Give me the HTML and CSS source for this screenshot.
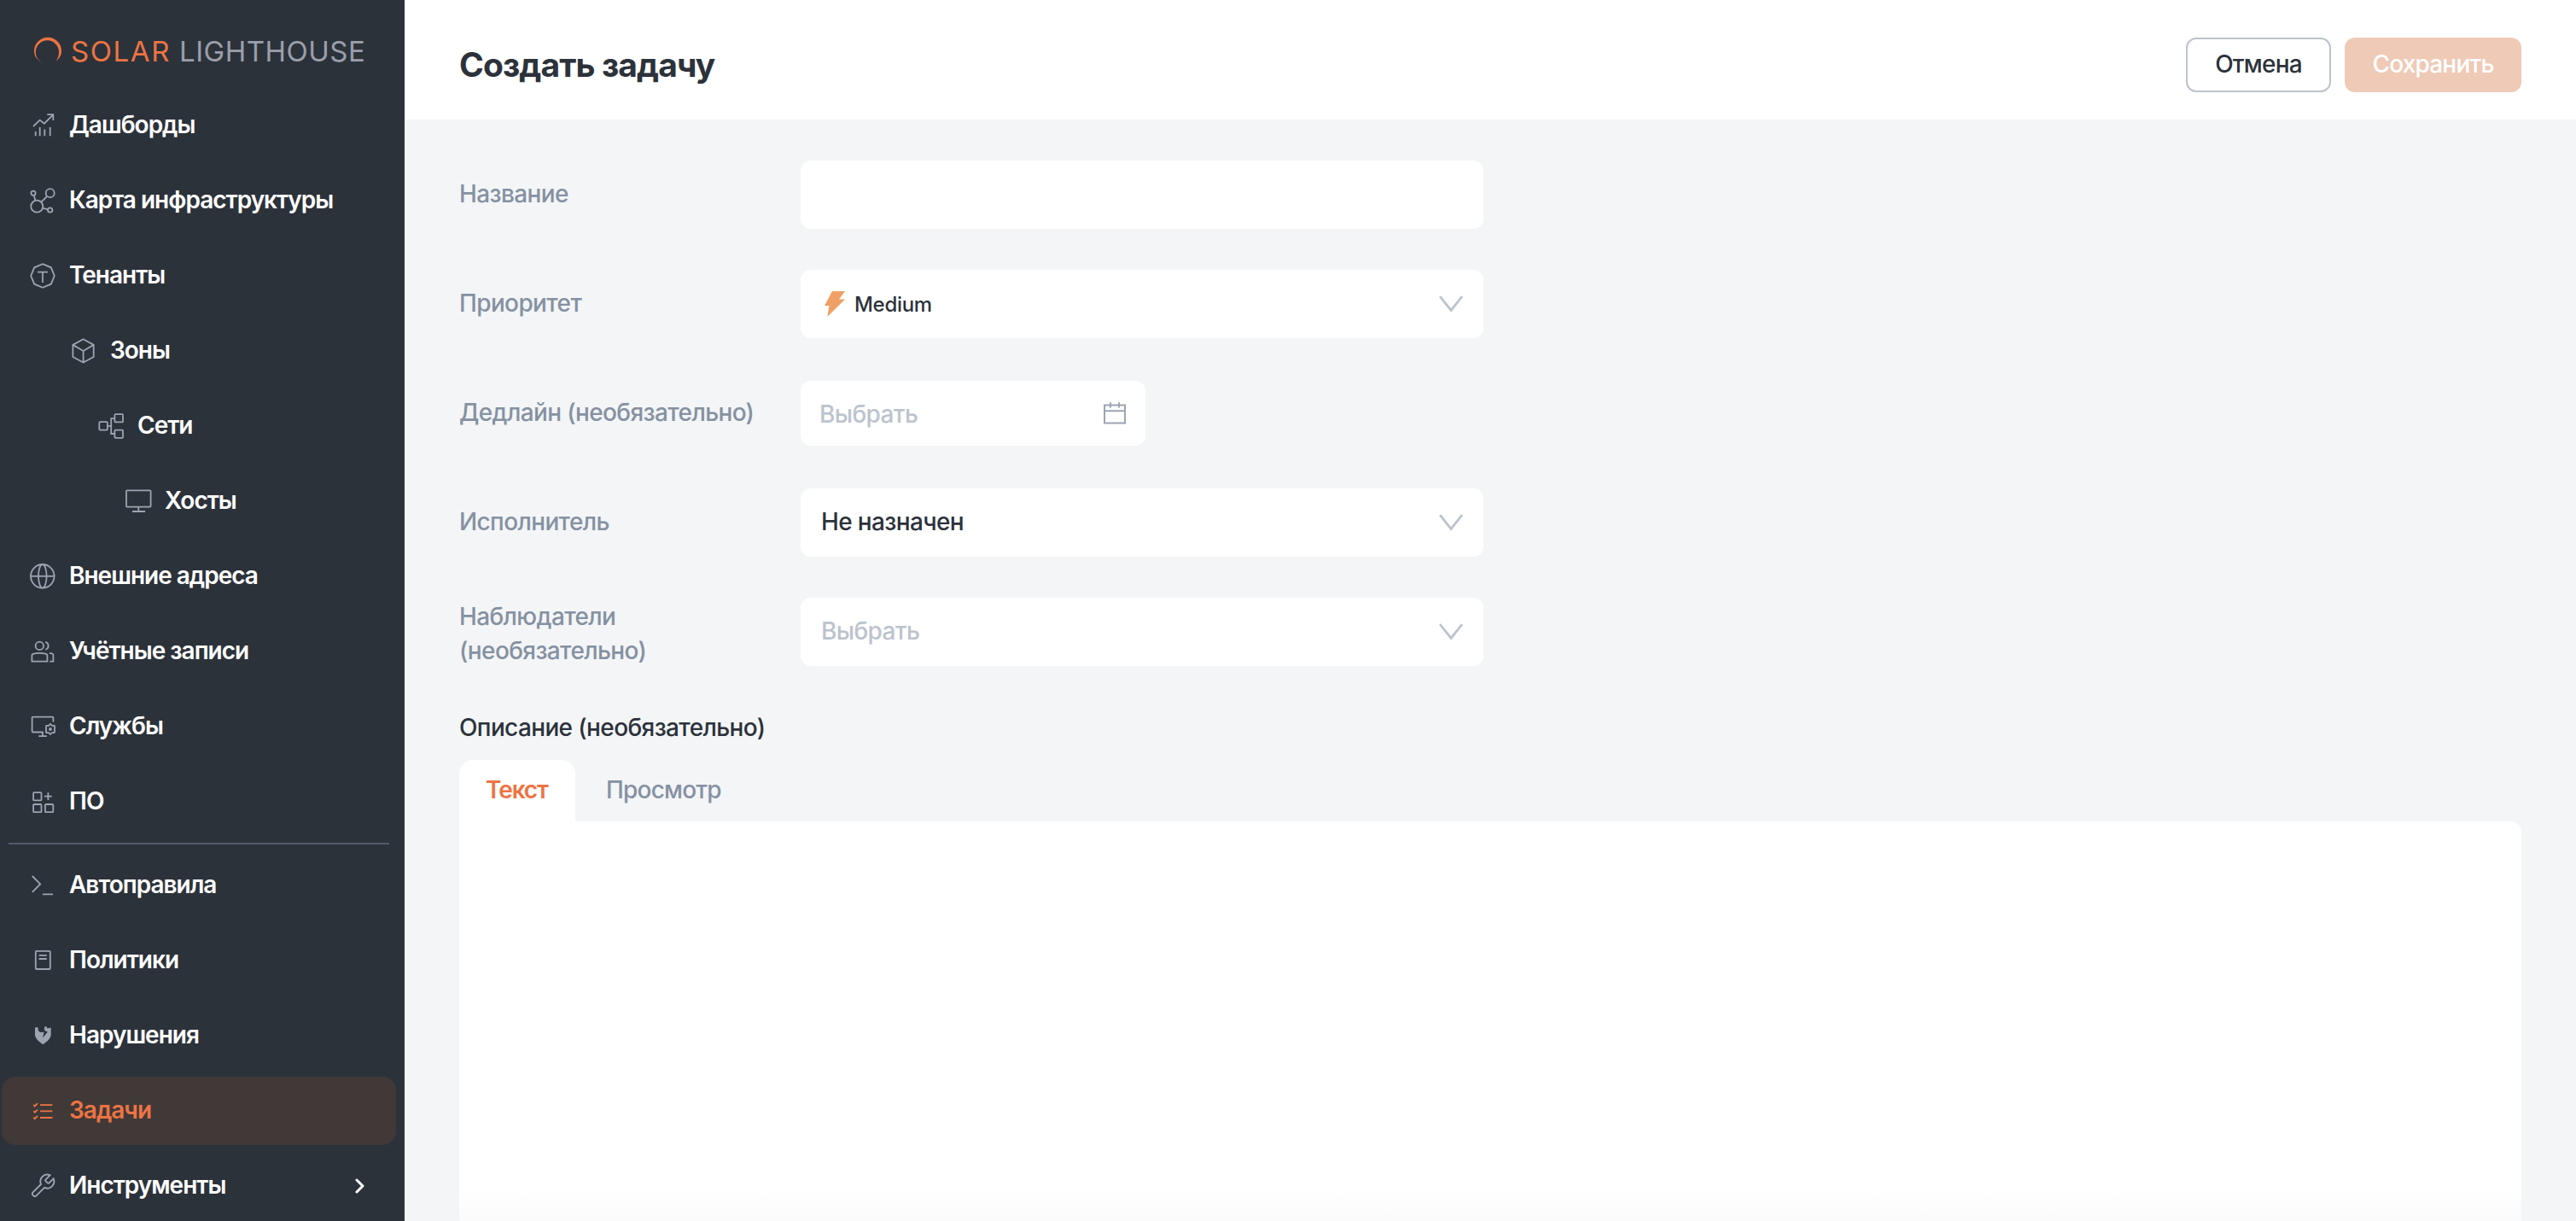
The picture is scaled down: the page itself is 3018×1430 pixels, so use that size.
FILE: index.html
```
<!DOCTYPE html>
<html lang="ru">
<head>
    <meta charset="UTF-8">
    <meta name="viewport" content="width=device-width, initial-scale=1.0">
    <title>Solar Lighthouse - Создать задачу</title>
    <link rel="stylesheet" href="styles.css">
</head>
<body>
    <div class="layout">

        <!-- Sidebar -->
        <aside class="sidebar">
            <div class="logo">
                <svg class="logo-mark" viewBox="0 0 34 34"><path d="M9.8 30.6C3 27 0 22.5 0 16.8A16 16 0 0 1 32 16.8C32 22 29.5 26 25.2 28.2C28 25.5 29 22 29 18.3A13.6 13.8 0 0 0 1.8 18C1.8 23.5 5 28 9.8 30.6z"/></svg>
                <span class="logo-solar">SOLAR</span>
                <span class="logo-name">LIGHTHOUSE</span>
            </div>

            <nav class="menu">
                <a class="menu-item">
                    <svg class="icon" viewBox="0 0 32 32"><path d="M5 17L12.7 9.6L17.8 13.7L28 3.7M21.3 3.2H28.3V10M7.7 23v5.3M12.7 18v10.3M18.3 20.5v7.8M24.7 18v10.3"/></svg>
                    <span>Дашборды</span>
                </a>
                <a class="menu-item">
                    <svg class="icon" viewBox="0 0 32 32"><circle cx="5" cy="7.2" r="2.6"/><circle cx="24.7" cy="7.2" r="5"/><circle cx="9.3" cy="22.7" r="7"/><circle cx="24.7" cy="27" r="2.7"/><path d="M5.8 9.7L7.4 16M14.2 17.7L21.2 10.8M16.1 24.7L22 26.3"/></svg>
                    <span>Карта инфраструктуры</span>
                </a>
                <a class="menu-item">
                    <svg class="icon" viewBox="0 0 32 32"><path d="M16 2.2L25.8 6.3L29.8 16L25.8 25.7L16 29.8L6.2 25.7L2.2 16L6.2 6.3zM10 11.6H22M16 11.6V24"/></svg>
                    <span>Тенанты</span>
                </a>
                <a class="menu-item level-1">
                    <svg class="icon" viewBox="0 0 32 32"><path d="M15.6 2.2L27.7 8.9V23L15.6 29.5L3.4 23V8.9zM3.4 8.9L15.6 16L27.7 8.9M15.6 16V29.5"/></svg>
                    <span>Зоны</span>
                </a>
                <a class="menu-item level-2">
                    <svg class="icon" viewBox="0 0 32 32"><rect x="2.3" y="11.2" width="9.6" height="9.4" rx="1"/><rect x="20.4" y="2.2" width="9.6" height="9.2" rx="1"/><rect x="20.4" y="20.6" width="9.6" height="9.2" rx="1"/><path d="M12 15.9H16.2M20.4 7.2H16.2V25H20.4"/></svg>
                    <span>Сети</span>
                </a>
                <a class="menu-item level-3">
                    <svg class="icon" viewBox="0 0 32 32"><rect x="2" y="3.4" width="28.6" height="19.2" rx="1"/><path d="M16.3 22.6V28M9 28H24"/></svg>
                    <span>Хосты</span>
                </a>
                <a class="menu-item">
                    <svg class="icon" viewBox="0 0 32 32"><circle cx="15.8" cy="15.8" r="13.8"/><ellipse cx="15.8" cy="15.8" rx="4.8" ry="13.8"/><path d="M2 15.8H29.6"/></svg>
                    <span>Внешние адреса</span>
                </a>
                <a class="menu-item">
                    <svg class="icon" viewBox="0 0 32 32"><circle cx="12.3" cy="9.4" r="4.7"/><path d="M3.4 27.7V21Q3.4 19 5.4 18.6Q12.4 17.2 19.4 18.6Q21.4 19 21.4 21V27.7zM19.3 4.8A4.7 4.7 0 0 1 19.3 13.8M23.8 18.2H26Q28.4 18.6 28.4 20.5V27.7H24.3"/></svg>
                    <span>Учётные записи</span>
                </a>
                <a class="menu-item">
                    <svg class="icon" viewBox="0 0 32 32"><path d="M28.4 10.5V5.5Q28.4 4.6 27.5 4.6H4.5Q3.6 4.6 3.6 5.5V21.6Q3.6 22.5 4.5 22.5H16.8M16 22.5V27M11.2 27.2H20.8"/><path d="M25 12.9L27 14.8L29.7 14.9L30.2 17.5L29.8 19L30.2 20.7L29.7 23.1L27 23.2L25 25.1L23 23.2L20.3 23.1L19.8 20.7L20.2 19L19.8 17.5L20.3 14.9L23 14.8z"/><circle cx="25" cy="19" r="1"/></svg>
                    <span>Службы</span>
                </a>
                <a class="menu-item">
                    <svg class="icon" viewBox="0 0 32 32"><rect x="5.1" y="5.2" width="9.4" height="9.2" rx="1"/><rect x="5.1" y="19" width="9.4" height="9.2" rx="1"/><rect x="18.9" y="19" width="9.4" height="9.2" rx="1"/><path d="M22.4 5.2V14M18 9.6H26.8"/></svg>
                    <span>ПО</span>
                </a>

                <div class="menu-divider"></div>

                <a class="menu-item">
                    <svg class="icon" viewBox="0 0 32 32"><path d="M3.8 5L13.2 14.4L3.8 23.8M16 26.4H28"/></svg>
                    <span>Автоправила</span>
                </a>
                <a class="menu-item">
                    <svg class="icon" viewBox="0 0 32 32"><rect x="7.8" y="4.8" width="17" height="21.2" rx="1"/><path d="M11.6 9.8H20.8M11.6 14H20.8"/></svg>
                    <span>Политики</span>
                </a>
                <a class="menu-item">
                    <svg class="icon icon-filled" viewBox="0 0 32 32"><path d="M7 6.6L10.3 6L11 10.6L13.6 12L17.6 11.8L16 18.6L21.8 11.4L18.2 10L18 5.6L20.4 5.2L21.6 7.4L25.7 6.4V15.5Q25 20.5 16.3 26.3Q7.7 20.5 7 15.5z"/></svg>
                    <span>Нарушения</span>
                </a>
                <a class="menu-item active">
                    <svg class="icon" viewBox="0 0 32 32"><path d="M13 9.2H27.4M13 16.4H27.4M13 24H27.4M5.2 9L6.8 10.4L10 7.2M5.2 16.4L6.8 17.8L10 14.6M5.2 23.8L6.8 25.2L10 22"/></svg>
                    <span>Задачи</span>
                </a>
                <a class="menu-item">
                    <svg class="icon icon-wrench" viewBox="0 0 24 24"><path d="M14.7 6.3a1 1 0 0 0 0 1.4l1.6 1.6a1 1 0 0 0 1.4 0l3.77-3.77a6 6 0 0 1-7.94 7.94l-6.91 6.91a2.12 2.12 0 0 1-3-3l6.91-6.91a6 6 0 0 1 7.94-7.94l-3.76 3.76z"/></svg>
                    <span>Инструменты</span>
                    <svg class="menu-arrow" viewBox="0 0 12 18"><path d="M2 2L9 9L2 16"/></svg>
                </a>
            </nav>
        </aside>

        <!-- Page -->
        <main class="page">
            <header class="header">
                <h1>Создать задачу</h1>
                <div class="actions">
                    <button class="btn btn-cancel">Отмена</button>
                    <button class="btn btn-save" disabled>Сохранить</button>
                </div>
            </header>

            <form class="form">
                <div class="row">
                    <label class="label">Название</label>
                    <div class="field"></div>
                </div>

                <div class="row">
                    <label class="label">Приоритет</label>
                    <div class="field">
                        <svg class="bolt" viewBox="0 0 24 30"><path d="M9 0H24L17 9.4H24L3.4 30L5.4 17H0z"/></svg>
                        <span class="priority">Medium</span>
                        <svg class="chevron" viewBox="0 0 28 20"><path d="M1 1L14 17.4L27 1"/></svg>
                    </div>
                </div>

                <div class="row">
                    <label class="label">Дедлайн (необязательно)</label>
                    <div class="field field-date">
                        <span class="placeholder">Выбрать</span>
                        <svg class="calendar" viewBox="0 0 28 28"><path d="M2 4.6H26V25.6H2zM2 11.2H26M9 1.2V7.4M19 1.2V7.4"/></svg>
                    </div>
                </div>

                <div class="row">
                    <label class="label">Исполнитель</label>
                    <div class="field">
                        <span class="value">Не назначен</span>
                        <svg class="chevron" viewBox="0 0 28 20"><path d="M1 1L14 17.4L27 1"/></svg>
                    </div>
                </div>

                <div class="row">
                    <label class="label label-multiline">Наблюдатели (необязательно)</label>
                    <div class="field">
                        <span class="placeholder">Выбрать</span>
                        <svg class="chevron" viewBox="0 0 28 20"><path d="M1 1L14 17.4L27 1"/></svg>
                    </div>
                </div>

                <!-- Description -->
                <div class="description">
                    <div class="description-title">Описание (необязательно)</div>
                    <div class="tabs">
                        <div class="tab tab-active"><span>Текст</span></div>
                        <div class="tab"><span>Просмотр</span></div>
                    </div>
                    <div class="editor"></div>
                </div>
            </form>
        </main>
    </div>
</body>
</html>
```
FILE: styles.css
```
* {
    box-sizing: border-box;
}
body {
    margin: 0;
    font-family: Inter, "Liberation Sans", sans-serif;
    font-size: 28px;
    font-weight: 500;
    letter-spacing: -0.63px;
    color: #2c323a;
    background-color: #f3f5f7;
}
.layout {
    display: flex;
    height: 100vh;
    overflow: hidden;
}

/* Sidebar */
.sidebar {
    width: 474px;
    flex-shrink: 0;
    background-color: #2c323a;
    overflow: hidden;
}
.logo {
    display: flex;
    align-items: center;
    height: 107px;
    padding: 12px 0 0 40px;
    font-size: 33px;
    font-weight: 400;
    letter-spacing: 0.5px;
}
.logo-mark {
    width: 34px;
    height: 34px;
    margin-right: 9px;
    fill: #ed7443;
}
.logo-solar {
    color: #ed7443;
    margin-right: 10px;
    letter-spacing: 1.6px;
}
.logo-name {
    color: #9a9fab;
}
.menu {
    display: flex;
    flex-direction: column;
    gap: 8px;
    padding: 0 10px 0 2px;
}
.menu-item {
    display: flex;
    align-items: center;
    gap: 15px;
    height: 80px;
    flex-shrink: 0;
    padding: 0 32px;
    border-radius: 16px;
    font-weight: 600;
    letter-spacing: -1px;
    color: #fff;
}
.menu-item span {
    padding-bottom: 2px;
}
.level-1 {
    padding-left: 80px;
}
.level-2 {
    padding-left: 112px;
}
.level-3 {
    padding-left: 144px;
}
.active {
    color: #ed7443;
    background-color: #403938;
}
.icon {
    width: 32px;
    height: 32px;
    fill: none;
    stroke: #9da4b2;
    stroke-width: 1.8;
}
.icon-filled {
    fill: #9da4b2;
    stroke: none;
}
.icon-wrench {
    stroke-width: 1.4;
}
.active .icon {
    stroke: #ed7443;
}
.menu-arrow {
    width: 12px;
    height: 18px;
    margin-left: auto;
    margin-right: 4px;
    fill: none;
    stroke: #fff;
    stroke-width: 3;
    stroke-linecap: round;
    stroke-linejoin: round;
}
.menu-divider {
    height: 2px;
    flex-shrink: 0;
    margin: 0 8px;
    background-color: #555a68;
}

/* Header */
.page {
    flex: 1;
    display: flex;
    flex-direction: column;
}
.header {
    display: flex;
    justify-content: space-between;
    align-items: center;
    height: 140px;
    padding: 12px 64px 0;
    background-color: #fff;
}
h1 {
    margin: 0;
    padding-bottom: 1px;
    font-size: 39px;
    font-weight: 700;
    letter-spacing: -0.9px;
}
.actions {
    display: flex;
    gap: 16px;
}
.btn {
    height: 64px;
    padding: 0 0 2px;
    border: none;
    border-radius: 12px;
    font: inherit;
    letter-spacing: -0.8px;
}
.btn-cancel {
    width: 170px;
    border: 2px solid #bcc3cd;
    background-color: #fff;
    color: #2c323a;
}
.btn-save {
    width: 207px;
    background-color: #efcab7;
    color: #fff;
}

/* Form */
.form {
    flex: 1;
    display: flex;
    flex-direction: column;
    padding: 48px 64px 0;
}
.row {
    display: flex;
    align-items: center;
    height: 80px;
    margin-bottom: 48px;
}
.label {
    width: 360px;
    margin-right: 40px;
    padding-bottom: 2px;
    line-height: 40px;
    color: #8591a1;
}
.label-multiline {
    padding-top: 3px;
    padding-bottom: 0;
}
.field {
    display: flex;
    align-items: center;
    width: 800px;
    height: 80px;
    padding: 0 24px;
    border-radius: 12px;
    background-color: #fff;
}
.field-date {
    width: 404px;
    height: 76px;
    padding: 0 22px;
}
.value,
.placeholder {
    padding-bottom: 2px;
}
.placeholder {
    color: #bcc3cd;
}
.field-date .placeholder {
    padding-top: 2px;
    padding-bottom: 0;
}
.priority {
    font-size: 24px;
    letter-spacing: -0.3px;
}
.bolt {
    width: 24px;
    height: 30px;
    margin-left: 4px;
    margin-right: 11px;
    fill: #f0a064;
}
.chevron {
    width: 28px;
    height: 20px;
    margin-left: auto;
    fill: none;
    stroke: #bcc3cd;
    stroke-width: 2.8;
}
.calendar {
    width: 28px;
    height: 28px;
    margin-left: auto;
    fill: none;
    stroke: #9da5b3;
    stroke-width: 2;
}

/* Description */
.description {
    flex: 1;
    display: flex;
    flex-direction: column;
    margin-top: 4px;
}
.description-title {
    line-height: 40px;
    margin-bottom: 18px;
}
.tabs {
    display: flex;
    height: 72px;
}
.tab {
    padding: 15px 32px 0 36px;
    line-height: 40px;
    letter-spacing: -0.8px;
    color: #8591a1;
}
.tab-active {
    width: 136px;
    padding-left: 31px;
    border-radius: 16px 16px 0 0;
    background-color: #fff;
    font-weight: 600;
    letter-spacing: -1.1px;
    color: #ed7443;
}
.editor {
    flex: 1;
    border-radius: 0 12px 0 0;
    background: linear-gradient(#fff calc(100% - 40px), #fbfbfb);
}
```
